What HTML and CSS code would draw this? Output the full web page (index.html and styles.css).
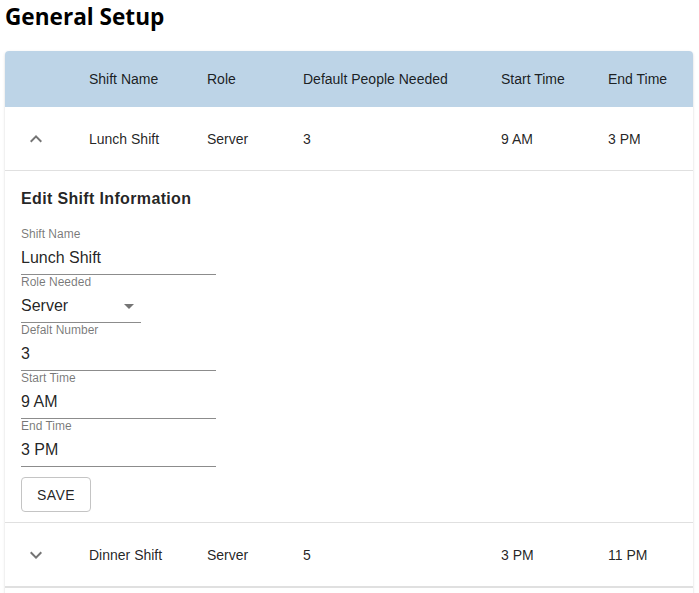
FILE: index.html
```html
<!DOCTYPE html>
<html>
<head>
<meta charset="utf-8">
<link rel="stylesheet" href="styles.css">
</head>
<body>
<div class="page">
  <h1 class="title">General Setup</h1>
  <div class="paper">
    <div class="row head">
      <div class="cell"></div>
      <div class="cell">Shift Name</div>
      <div class="cell">Role</div>
      <div class="cell">Default People Needed</div>
      <div class="cell">Start Time</div>
      <div class="cell">End Time</div>
    </div>
    <div class="row">
      <div class="cell icon"><svg viewBox="0 0 24 24" width="24" height="24"><path d="M7.41 15.41L12 10.83l4.59 4.58L18 14l-6-6-6 6z"/></svg></div>
      <div class="cell">Lunch Shift</div>
      <div class="cell">Server</div>
      <div class="cell">3</div>
      <div class="cell">9 AM</div>
      <div class="cell">3 PM</div>
    </div>
    <div class="collapse">
      <div class="panel">
        <h2 class="panel-title">Edit Shift Information</h2>
        <div class="field">
          <div class="label">Shift Name</div>
          <div class="input">Lunch Shift</div>
        </div>
        <div class="field">
          <div class="label">Role Needed</div>
          <div class="input select">Server<svg viewBox="0 0 24 24" width="24" height="24"><path d="M7 10l5 5 5-5z"/></svg></div>
        </div>
        <div class="field">
          <div class="label">Defalt Number</div>
          <div class="input">3</div>
        </div>
        <div class="field">
          <div class="label">Start Time</div>
          <div class="input">9 AM</div>
        </div>
        <div class="field">
          <div class="label">End Time</div>
          <div class="input">3 PM</div>
        </div>
        <button class="btn">SAVE</button>
      </div>
    </div>
    <div class="row">
      <div class="cell icon"><svg viewBox="0 0 24 24" width="24" height="24"><path d="M7.41 8.59L12 13.17l4.59-4.58L18 10l-6 6-6-6 1.41-1.41z"/></svg></div>
      <div class="cell">Dinner Shift</div>
      <div class="cell">Server</div>
      <div class="cell">5</div>
      <div class="cell">3 PM</div>
      <div class="cell">11 PM</div>
    </div>
    <div class="collapse"></div>
    <div class="rest"></div>
  </div>
</div>
</body>
</html>
```
FILE: styles.css
```css
html, body {
  margin: 0;
  padding: 0;
  background: #fff;
}
.page {
  padding: 0 6px 0 5px;
  font-family: "Liberation Sans", Arial, sans-serif;
  color: rgba(0, 0, 0, 0.87);
}
.title {
  font-family: "Open Sans", sans-serif;
  font-weight: 700;
  font-size: 22.6px;
  line-height: 32px;
  margin: 1px 0 18px;
  color: #000;
}
.paper {
  background: #fff;
  border-radius: 4px;
  box-shadow: 0 2px 1px -1px rgba(0,0,0,0.2), 0 1px 1px 0 rgba(0,0,0,0.14), 0 1px 3px 0 rgba(0,0,0,0.12);
  overflow: hidden;
}
.row {
  display: grid;
  grid-template-columns: 68px 118px 96px 198px 107px 101px;
  align-items: center;
  height: 63px;
  border-bottom: 1px solid #e0e0e0;
  font-size: 14px;
}
.row.head {
  height: 56px;
  border-bottom: none;
  background: #bdd4e7;
}
.cell {
  padding-left: 16px;
  white-space: nowrap;
}
.cell.icon {
  padding-left: 19px;
  display: flex;
  align-items: center;
}
.cell.icon svg {
  fill: #757575;
}
.collapse {
  border-bottom: 1px solid #e0e0e0;
}
.panel {
  padding: 16px 16px 10px;
}
.panel-title {
  margin: 0 0 16px;
  font-size: 16px;
  line-height: 24px;
  font-weight: 700;
  letter-spacing: 0.35px;
  color: rgba(0, 0, 0, 0.87);
}
.field {
  display: flex;
  flex-direction: column;
  width: 195px;
}
.label {
  font-size: 12px;
  line-height: 14px;
  color: rgba(0, 0, 0, 0.54);
}
.input {
  font-size: 16px;
  line-height: 19px;
  padding: 7px 0 7px;
  border-bottom: 1px solid #8c8c8c;
  color: rgba(0, 0, 0, 0.87);
}
.select {
  width: 120px;
  display: flex;
  align-items: center;
  justify-content: space-between;
}
.select svg {
  fill: #757575;
  margin: -2px 0 -3px;
}
.btn {
  margin-top: 10px;
  width: 70px;
  height: 35px;
  border: 1px solid #c4c4c4;
  border-radius: 4px;
  background: #fff;
  font-family: "Liberation Sans", Arial, sans-serif;
  font-size: 14px;
  letter-spacing: 0.4px;
  color: rgba(0, 0, 0, 0.87);
  padding: 0;
}
.rest {
  height: 20px;
}
```
